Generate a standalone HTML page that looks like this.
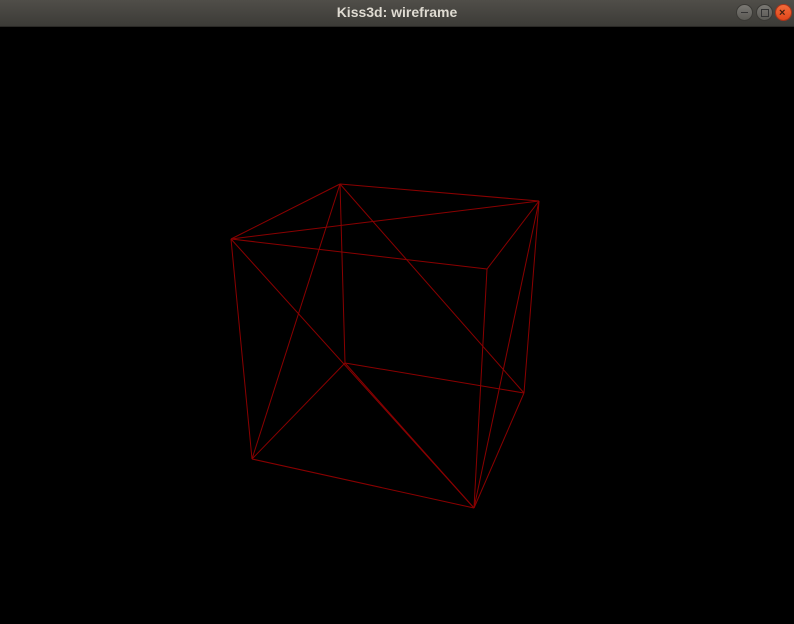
<!DOCTYPE html>
<html><head><meta charset="utf-8"><style>
html,body{margin:0;padding:0;background:#000;width:794px;height:624px;overflow:hidden}
.bar{position:absolute;left:0;top:0;width:794px;height:27px;background:linear-gradient(#504e49,#3c3b37);border-bottom:1px solid #2a2926;box-sizing:border-box}
.t{position:absolute;left:0;width:794px;top:4px;text-align:center;font:bold 14px "Liberation Sans",sans-serif;color:#dfdbd2}
.b{position:absolute;top:4px;width:17px;height:17px;border-radius:50%;background:linear-gradient(#7a7873,#5a5954);border:1px solid #3a3935;box-sizing:border-box}
svg{position:absolute;left:0;top:0}
</style></head><body>
<div class="bar"><div class="t">Kiss3d: wireframe</div>
<div class="b" style="left:736px"><div style="position:absolute;left:4px;top:7px;width:7px;height:1px;background:#333"></div></div>
<div class="b" style="left:756px"><div style="position:absolute;left:4px;top:4px;width:6px;height:6px;border:1px solid #333"></div></div>
<div class="b" style="left:775px;background:linear-gradient(#f26b3a,#e0461a);border-color:#a8341a"><div style="position:absolute;left:3px;top:2px;font:bold 11px 'Liberation Sans',sans-serif;color:#402010">×</div></div>
</div>
<svg width="794" height="624" stroke="#8a0000" stroke-width="1" fill="none">
<line x1="340" y1="184" x2="539" y2="201"/>
<line x1="340" y1="184" x2="231" y2="239"/>
<line x1="231" y1="239" x2="539" y2="201"/>
<line x1="231" y1="239" x2="487" y2="269"/>
<line x1="487" y1="269" x2="539" y2="201"/>
<line x1="340" y1="184" x2="345" y2="363"/>
<line x1="340" y1="184" x2="524" y2="393"/>
<line x1="340" y1="184" x2="252" y2="459"/>
<line x1="231" y1="239" x2="252" y2="459"/>
<line x1="231" y1="239" x2="474" y2="508"/>
<line x1="345" y1="363" x2="474" y2="508"/>
<line x1="487" y1="269" x2="474" y2="508"/>
<line x1="539" y1="201" x2="474" y2="508"/>
<line x1="539" y1="201" x2="524" y2="393"/>
<line x1="345" y1="363" x2="524" y2="393"/>
<line x1="345" y1="363" x2="252" y2="459"/>
<line x1="252" y1="459" x2="474" y2="508"/>
<line x1="524" y1="393" x2="474" y2="508"/>
</svg>
</body></html>
